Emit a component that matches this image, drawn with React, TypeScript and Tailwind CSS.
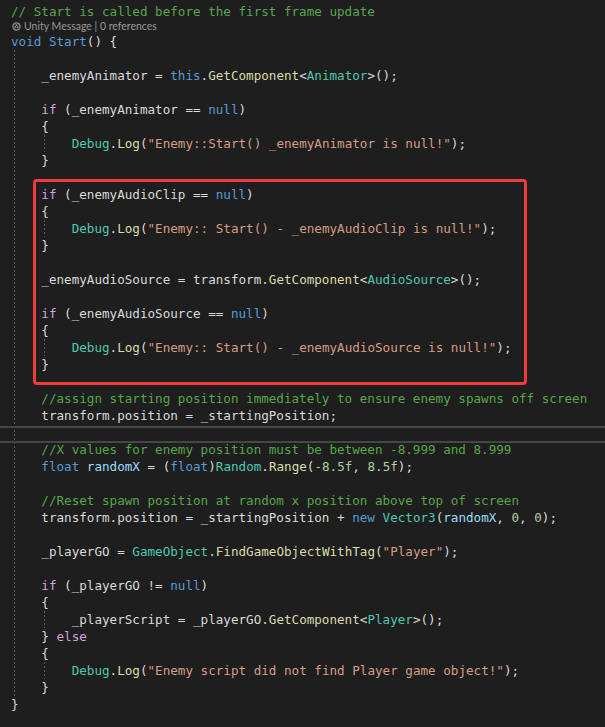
const C = 'text-[#57a64a]';
const K = 'text-[#569cd6]';
const P = 'text-[#d8a0df]';
const D = 'text-[#dadada]';
const M = 'text-[#dcdcaa]';
const T = 'text-[#4ec9b0]';
const S = 'text-[#d69d85]';
const N = 'text-[#b5cea8]';
const L = 'text-[#9cdcfe]';

type Tok = [string, string];

const code: Tok[][] = [
  [[K, 'void '], [K, 'Start'], [D, '() {']],
  [],
  [[D, '    _enemyAnimator = '], [K, 'this'], [D, '.'], [M, 'GetComponent'], [D, '<'], [T, 'Animator'], [D, '>();']],
  [],
  [[D, '    '], [P, 'if'], [D, ' (_enemyAnimator == '], [K, 'null'], [D, ')']],
  [[D, '    {']],
  [[D, '        '], [T, 'Debug'], [D, '.'], [M, 'Log'], [D, '('], [S, '"Enemy::Start() _enemyAnimator is null!"'], [D, ');']],
  [[D, '    }']],
  [],
  [[D, '    '], [P, 'if'], [D, ' (_enemyAudioClip == '], [K, 'null'], [D, ')']],
  [[D, '    {']],
  [[D, '        '], [T, 'Debug'], [D, '.'], [M, 'Log'], [D, '('], [S, '"Enemy:: Start() - _enemyAudioClip is null!"'], [D, ');']],
  [[D, '    }']],
  [],
  [[D, '    _enemyAudioSource = transform.'], [M, 'GetComponent'], [D, '<'], [T, 'AudioSource'], [D, '>();']],
  [],
  [[D, '    '], [P, 'if'], [D, ' (_enemyAudioSource == '], [K, 'null'], [D, ')']],
  [[D, '    {']],
  [[D, '        '], [T, 'Debug'], [D, '.'], [M, 'Log'], [D, '('], [S, '"Enemy:: Start() - _enemyAudioSource is null!"'], [D, ');']],
  [[D, '    }']],
  [],
  [[C, '    //assign starting position immediately to ensure enemy spawns off screen']],
  [[D, '    transform.position = _startingPosition;']],
  [],
  [[C, '    //X values for enemy position must be between -8.999 and 8.999']],
  [[D, '    '], [K, 'float'], [L, ' randomX'], [D, ' = ('], [K, 'float'], [D, ')'], [T, 'Random'], [D, '.'], [M, 'Range'], [D, '('], [N, '-8.5f'], [D, ', '], [N, '8.5f'], [D, ');']],
  [],
  [[C, '    //Reset spawn position at random x position above top of screen']],
  [[D, '    transform.position = _startingPosition + '], [K, 'new'], [D, ' '], [T, 'Vector3'], [D, '('], [L, 'randomX'], [D, ', '], [N, '0'], [D, ', '], [N, '0'], [D, ');']],
  [],
  [[D, '    _playerGO = '], [T, 'GameObject'], [D, '.'], [M, 'FindGameObjectWithTag'], [D, '('], [S, '"Player"'], [D, ');']],
  [],
  [[D, '    '], [P, 'if'], [D, ' (_playerGO != '], [K, 'null'], [D, ')']],
  [[D, '    {']],
  [[D, '        _playerScript = _playerGO.'], [M, 'GetComponent'], [D, '<'], [T, 'Player'], [D, '>();']],
  [[D, '    } '], [P, 'else']],
  [[D, '    {']],
  [[D, '        '], [T, 'Debug'], [D, '.'], [M, 'Log'], [D, '('], [S, '"Enemy script did not find Player game object!"'], [D, ');']],
  [[D, '    }']],
  [[D, '}']],
];

const innerGuides = [6, 11, 18, 34, 37];
const dash = 'bg-[repeating-linear-gradient(to_bottom,#5a5a5a_0,#5a5a5a_2px,transparent_2px,transparent_4px)]';

function UnityIcon() {
  return (
    <svg width="9" height="9" viewBox="0 0 16 16" className="shrink-0">
      <circle cx="8" cy="8" r="7.5" fill="#8a8a8a" />
      <path d="M8 3.2 L12.2 5.6 V10.4 L8 12.8 L3.8 10.4 V5.6 Z" fill="none" stroke="#1e1e1e" strokeWidth="1.6" />
      <path d="M8 8 V12.6 M8 8 L12 5.8 M8 8 L4 5.8" stroke="#1e1e1e" strokeWidth="1.4" />
    </svg>
  );
}

export default function App() {
  return (
    <div className="w-[605px] h-[727px] bg-[#1e1e1e] overflow-hidden pt-[3px] font-['DejaVu_Sans_Mono',monospace] text-[12.6px]">
      <div className={`h-[17px] leading-[17px] pl-[11px] whitespace-pre ${C}`}>
        // Start is called before the first frame update
      </div>
      <div className="h-[13px] pl-[12px] flex items-center gap-[3px] text-[#999999] font-['Lato',sans-serif] text-[10.5px] leading-[13px]">
        <UnityIcon />
        <span>Unity Message | 0 references</span>
      </div>

      <div className="relative">
        {code.map((line, i) => (
          <div key={i} className="h-[17px] leading-[17px] pl-[11px] whitespace-pre">
            {line.map(([cls, text], j) => (
              <span key={j} className={cls}>{text}</span>
            ))}
          </div>
        ))}

        <div className={`absolute left-[14px] top-[17px] w-px h-[646px] ${dash}`} />
        {innerGuides.map((i) => (
          <div key={i} className={`absolute left-[44px] w-px h-[17px] ${dash}`} style={{ top: i * 17 }} />
        ))}

        <div className="absolute left-0 right-0 top-[393px] h-[17px] border-y-2 border-[#464646]" />

        <div className="absolute left-[33px] top-[146px] w-[494px] h-[206px] border-[3px] border-[#ef3b3b] rounded-[4px]" />
      </div>
    </div>
  );
}
